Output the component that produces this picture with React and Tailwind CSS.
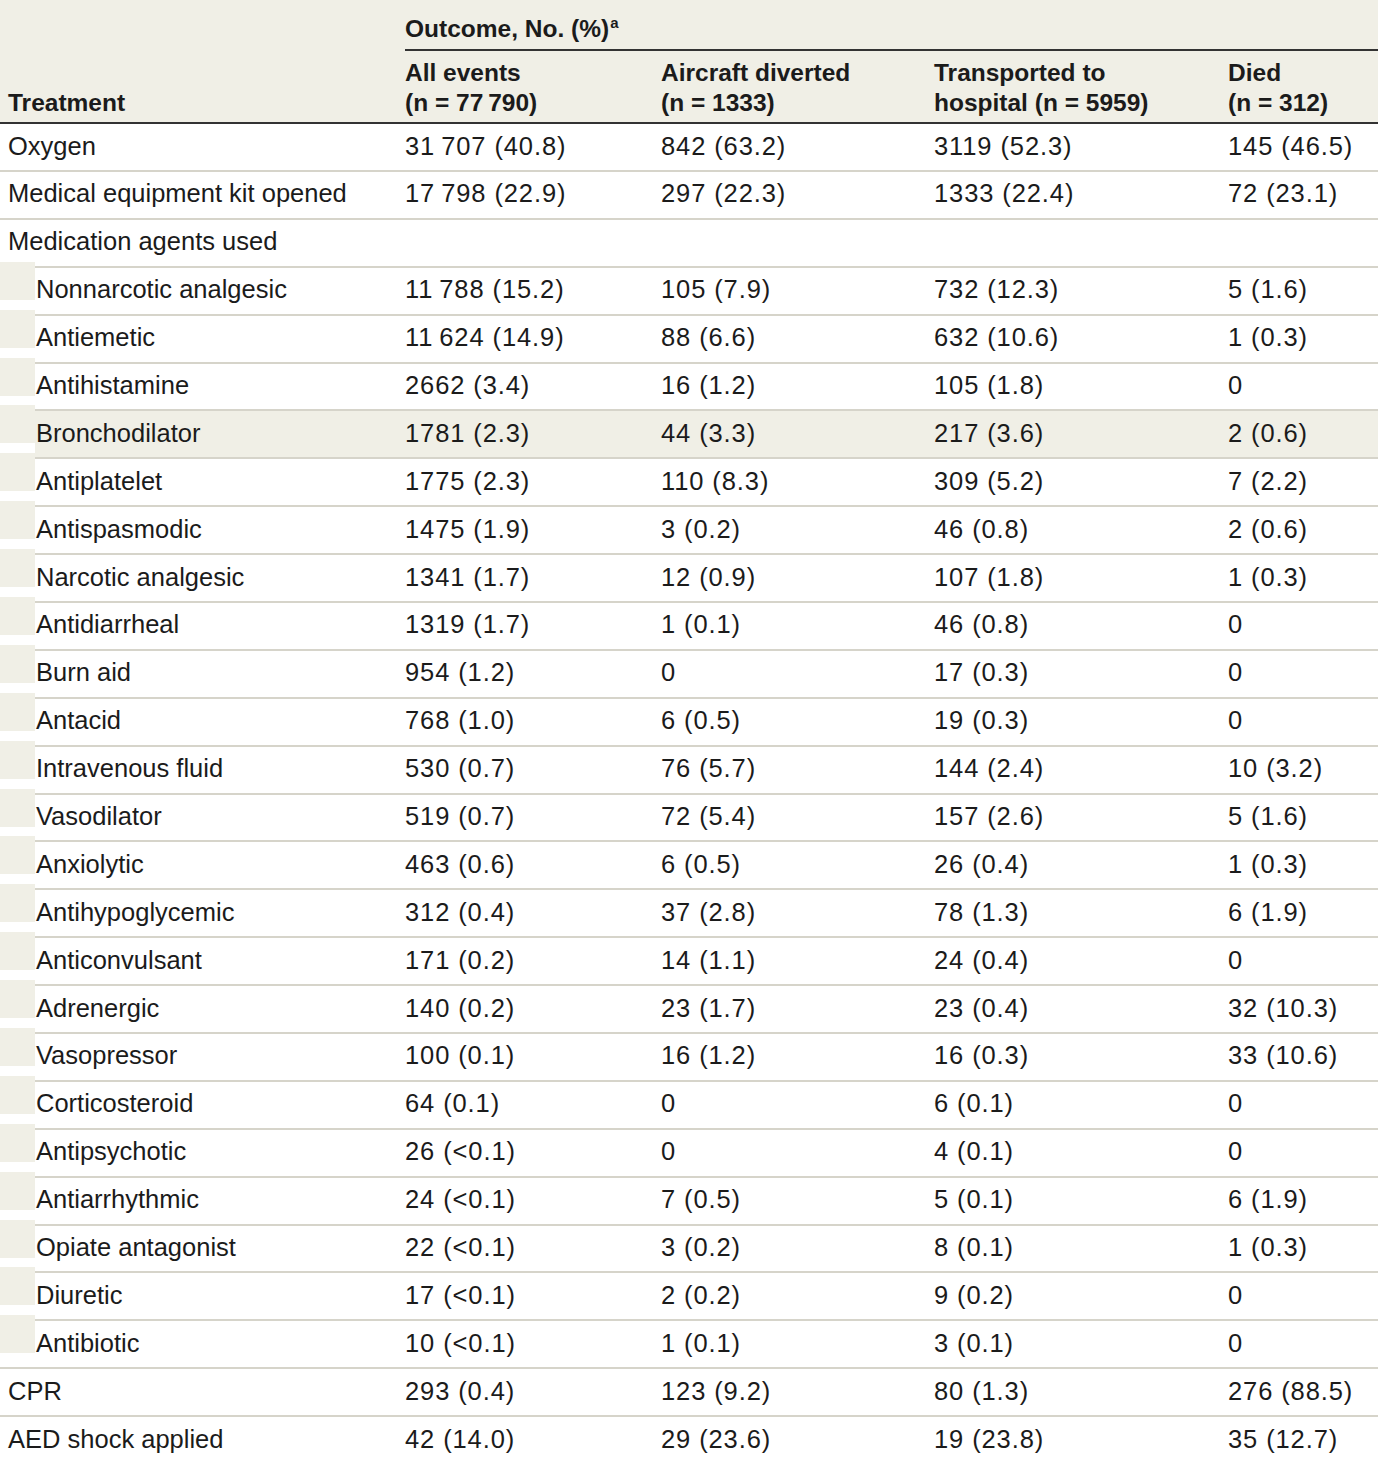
import React from 'react';

const S = '\u2009';
const top = [
  { l: 'Oxygen', v: [`31${S}707 (40.8)`, '842 (63.2)', '3119 (52.3)', '145 (46.5)'] },
  { l: 'Medical equipment kit opened', v: [`17${S}798 (22.9)`, '297 (22.3)', '1333 (22.4)', '72 (23.1)'] },
  { l: 'Medication agents used', v: ['', '', '', ''] },
];
const meds = [
  ['Nonnarcotic analgesic', `11${S}788 (15.2)`, '105 (7.9)', '732 (12.3)', '5 (1.6)'],
  ['Antiemetic', `11${S}624 (14.9)`, '88 (6.6)', '632 (10.6)', '1 (0.3)'],
  ['Antihistamine', '2662 (3.4)', '16 (1.2)', '105 (1.8)', '0'],
  ['Bronchodilator', '1781 (2.3)', '44 (3.3)', '217 (3.6)', '2 (0.6)', true],
  ['Antiplatelet', '1775 (2.3)', '110 (8.3)', '309 (5.2)', '7 (2.2)'],
  ['Antispasmodic', '1475 (1.9)', '3 (0.2)', '46 (0.8)', '2 (0.6)'],
  ['Narcotic analgesic', '1341 (1.7)', '12 (0.9)', '107 (1.8)', '1 (0.3)'],
  ['Antidiarrheal', '1319 (1.7)', '1 (0.1)', '46 (0.8)', '0'],
  ['Burn aid', '954 (1.2)', '0', '17 (0.3)', '0'],
  ['Antacid', '768 (1.0)', '6 (0.5)', '19 (0.3)', '0'],
  ['Intravenous fluid', '530 (0.7)', '76 (5.7)', '144 (2.4)', '10 (3.2)'],
  ['Vasodilator', '519 (0.7)', '72 (5.4)', '157 (2.6)', '5 (1.6)'],
  ['Anxiolytic', '463 (0.6)', '6 (0.5)', '26 (0.4)', '1 (0.3)'],
  ['Antihypoglycemic', '312 (0.4)', '37 (2.8)', '78 (1.3)', '6 (1.9)'],
  ['Anticonvulsant', '171 (0.2)', '14 (1.1)', '24 (0.4)', '0'],
  ['Adrenergic', '140 (0.2)', '23 (1.7)', '23 (0.4)', '32 (10.3)'],
  ['Vasopressor', '100 (0.1)', '16 (1.2)', '16 (0.3)', '33 (10.6)'],
  ['Corticosteroid', '64 (0.1)', '0', '6 (0.1)', '0'],
  ['Antipsychotic', '26 (<0.1)', '0', '4 (0.1)', '0'],
  ['Antiarrhythmic', '24 (<0.1)', '7 (0.5)', '5 (0.1)', '6 (1.9)'],
  ['Opiate antagonist', '22 (<0.1)', '3 (0.2)', '8 (0.1)', '1 (0.3)'],
  ['Diuretic', '17 (<0.1)', '2 (0.2)', '9 (0.2)', '0'],
  ['Antibiotic', '10 (<0.1)', '1 (0.1)', '3 (0.1)', '0'],
];
const bottom = [
  { l: 'CPR', v: ['293 (0.4)', '123 (9.2)', '80 (1.3)', '276 (88.5)'] },
  { l: 'AED shock applied', v: ['42 (14.0)', '29 (23.6)', '19 (23.8)', '35 (12.7)'] },
];

function Cells({ v }) {
  return (
    <>
      <div className="w-[256px] shrink-0 tracking-[0.9px]">{v[0]}</div>
      <div className="w-[273px] shrink-0 tracking-[0.9px]">{v[1]}</div>
      <div className="w-[294px] shrink-0 tracking-[0.9px]">{v[2]}</div>
      <div className="flex-1 tracking-[0.9px]">{v[3]}</div>
    </>
  );
}

function Row({ l, v, first }) {
  return (
    <div
      className={
        first
          ? 'flex items-center h-[46px] pb-[3px]'
          : 'flex items-center h-[47.9px] pb-[3px] border-t-2 border-[#d6d4ca]'
      }
    >
      <div className="w-[405px] shrink-0 pl-[8px]">{l}</div>
      <Cells v={v} />
    </div>
  );
}

function MedRow({ r }) {
  const [l, a, b, c, d, hl] = r;
  return (
    <div className="flex h-[47.9px]">
      <div className="w-[35px] shrink-0 -mt-[4px] h-[38px] bg-[#f0efe6]" />
      <div
        className={
          hl
            ? 'flex flex-1 items-center border-t-2 border-[#d6d4ca] pb-[3px] bg-[#f0efe6]'
            : 'flex flex-1 items-center border-t-2 border-[#d6d4ca] pb-[3px]'
        }
      >
        <div className="w-[370px] shrink-0 pl-[1px]">{l}</div>
        <Cells v={[a, b, c, d]} />
      </div>
    </div>
  );
}

export default function App() {
  return (
    <div className="w-[1378px] h-[1460px] overflow-hidden bg-white text-[#1b1b1b] text-[25.5px] leading-[30px] font-['Liberation_Sans',Arial,sans-serif]">
      <div className="flex h-[124px] bg-[#f0efe6] border-b-2 border-[#333] font-bold text-[24.5px]">
        <div className="w-[405px] shrink-0 pl-[8px] flex items-end pb-[4px]">Treatment</div>
        <div className="flex-1 flex flex-col">
          <div className="h-[51px] border-b-2 border-[#333] pt-[14px]">
            Outcome, No. (%)<span className="text-[15px] align-[9px] leading-none ml-[1px]">a</span>
          </div>
          <div className="flex pt-[7px]">
            <div className="w-[256px] shrink-0">All events<br />(n = 77{S}790)</div>
            <div className="w-[273px] shrink-0">Aircraft diverted<br />(n = 1333)</div>
            <div className="w-[294px] shrink-0">Transported to<br />hospital (n = 5959)</div>
            <div className="flex-1">Died<br />(n = 312)</div>
          </div>
        </div>
      </div>
      {top.map((r, i) => (
        <Row key={r.l} l={r.l} v={r.v} first={i === 0} />
      ))}
      {meds.map((r) => (
        <MedRow key={r[0]} r={r} />
      ))}
      {bottom.map((r) => (
        <Row key={r.l} l={r.l} v={r.v} />
      ))}
    </div>
  );
}
